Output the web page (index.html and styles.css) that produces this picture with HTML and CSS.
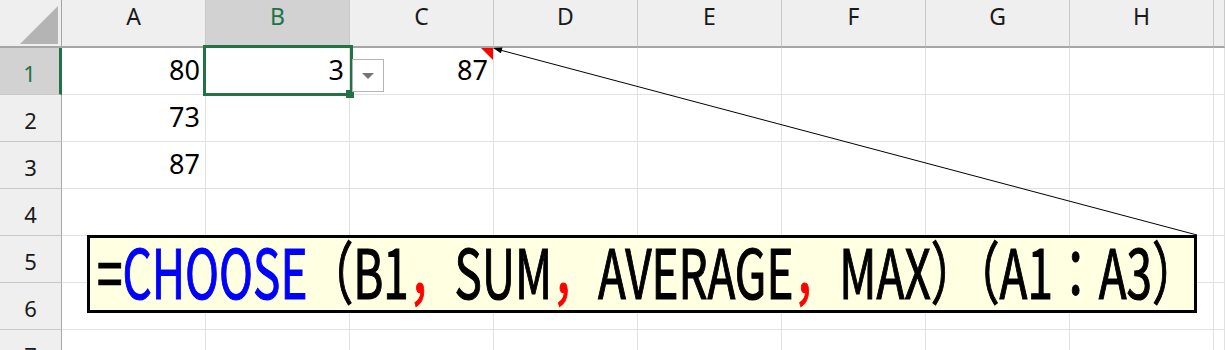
FILE: index.html
```html
<!DOCTYPE html>
<html lang="ja">
<head>
  <meta charset="UTF-8" />
  <title>CHOOSE</title>
  <link rel="stylesheet" href="styles.css">
</head>
<body>

  <div class="sheet">
    <div class="grid">
      <div class="corner"><div class="corner-mark"></div></div>
      <div class="col-head">A</div>
      <div class="col-head active">B</div>
      <div class="col-head">C</div>
      <div class="col-head">D</div>
      <div class="col-head">E</div>
      <div class="col-head">F</div>
      <div class="col-head">G</div>
      <div class="col-head">H</div>
      <div class="col-head"></div>

      <div class="row-head active">1</div>
      <div class="cell num">80</div>
      <div class="cell num">3</div>
      <div class="cell num">87</div>
      <div class="cell"></div><div class="cell"></div><div class="cell"></div><div class="cell"></div><div class="cell"></div><div class="cell"></div>

      <div class="row-head">2</div>
      <div class="cell num">73</div>
      <div class="cell"></div><div class="cell"></div><div class="cell"></div><div class="cell"></div><div class="cell"></div><div class="cell"></div><div class="cell"></div><div class="cell"></div>

      <div class="row-head">3</div>
      <div class="cell num">87</div>
      <div class="cell"></div><div class="cell"></div><div class="cell"></div><div class="cell"></div><div class="cell"></div><div class="cell"></div><div class="cell"></div><div class="cell"></div>

      <div class="row-head">4</div>
      <div class="cell"></div><div class="cell"></div><div class="cell"></div><div class="cell"></div><div class="cell"></div><div class="cell"></div><div class="cell"></div><div class="cell"></div><div class="cell"></div>

      <div class="row-head">5</div>
      <div class="cell"></div><div class="cell"></div><div class="cell"></div><div class="cell"></div><div class="cell"></div><div class="cell"></div><div class="cell"></div><div class="cell"></div><div class="cell"></div>

      <div class="row-head">6</div>
      <div class="cell"></div><div class="cell"></div><div class="cell"></div><div class="cell"></div><div class="cell"></div><div class="cell"></div><div class="cell"></div><div class="cell"></div><div class="cell"></div>

      <div class="row-head">7</div>
      <div class="cell"></div><div class="cell"></div><div class="cell"></div><div class="cell"></div><div class="cell"></div><div class="cell"></div><div class="cell"></div><div class="cell"></div><div class="cell"></div>
    </div>

    <!-- selected cell B1 -->
    <div class="selection"><span class="fill-handle"></span></div>
    <div class="dropdown"><span class="dropdown-arrow"></span></div>

    <!-- comment marker on C1 and its arrow -->
    <div class="comment-flag"></div>
    <svg class="arrow" width="1225" height="350" viewBox="0 0 1225 350">
      <line x1="1197" y1="235" x2="500" y2="50" stroke="#000" stroke-width="1" />
      <polygon points="493,48 502.5,47.4 500.9,53.2" fill="#000" />
    </svg>

    <div class="note">
      <span class="formula">=<span class="fn">CHOOSE</span>（B1<span class="sep">，</span>SUM<span class="sep">，</span>AVERAGE<span class="sep">，</span>MAX）（A1：A3）</span>
    </div>
  </div>

</body>
</html>
```

FILE: styles.css
```css
body {
  margin: 0;
  background: #fff;
  font-family: "Noto Sans", "Noto Sans CJK JP", sans-serif;
}

.sheet {
  position: relative;
  width: 1225px;
  height: 350px;
  overflow: hidden;
}

.grid {
  display: grid;
  grid-template-columns: 62px repeat(8, 144px) 1fr;
  grid-template-rows: 48px repeat(7, 47px);
}

.grid > div {
  box-sizing: border-box;
}

.corner {
  background: #efefef;
  border-right: 1px solid #a6a6a6;
  border-bottom: 2px solid #a6a6a6;
  position: relative;
}

.corner-mark {
  position: absolute;
  left: 20px;
  top: 6px;
  width: 38px;
  height: 38px;
  background: #b4b4b4;
  clip-path: polygon(100% 0, 100% 100%, 0 100%);
}

.col-head {
  background: #efefef;
  border-right: 1px solid #c8c8c8;
  border-bottom: 2px solid #a6a6a6;
  text-align: center;
  font-size: 23px;
  line-height: 23px;
  padding-top: 5px;
  color: #1a1a1a;
}

.col-head.active {
  background: #d2d2d2;
  color: #217346;
  border-bottom-color: #217346;
}

.row-head {
  background: #efefef;
  border-right: 1px solid #a6a6a6;
  border-bottom: 1px solid #c8c8c8;
  text-align: center;
  font-size: 22px;
  line-height: 22px;
  padding-top: 14px;
  color: #1a1a1a;
}

.row-head.active {
  background: #d2d2d2;
  color: #217346;
  border-right: 3px solid #217346;
}

.cell {
  border-right: 1px solid #e1e1e1;
  border-bottom: 1px solid #e1e1e1;
}

.num {
  display: flex;
  justify-content: flex-end;
  align-items: flex-end;
  padding: 0 5px 11px 0;
  font-size: 27px;
  line-height: 27px;
  color: #000;
}

.selection {
  position: absolute;
  left: 203px;
  top: 45px;
  width: 150px;
  height: 51px;
  box-sizing: border-box;
  border: 3px solid #217346;
}

.fill-handle {
  position: absolute;
  right: -4px;
  bottom: -5px;
  width: 8px;
  height: 8px;
  background: #217346;
}

.dropdown {
  position: absolute;
  left: 352px;
  top: 59px;
  width: 32px;
  height: 33px;
  box-sizing: border-box;
  border: 1px solid #b4b4b4;
  background: #fff;
  display: flex;
  align-items: center;
  justify-content: center;
}

.dropdown-arrow {
  width: 0;
  height: 0;
  border-left: 6px solid transparent;
  border-right: 6px solid transparent;
  border-top: 6px solid #767676;
}

.comment-flag {
  position: absolute;
  left: 481px;
  top: 48px;
  width: 12px;
  height: 12px;
  background: #ff0000;
  clip-path: polygon(0 0, 100% 0, 100% 100%);
}

.arrow {
  position: absolute;
  left: 0;
  top: 0;
  pointer-events: none;
}

.note {
  position: absolute;
  left: 87px;
  top: 235px;
  width: 1110px;
  height: 78px;
  box-sizing: border-box;
  border: 3px solid #000;
  background: #ffffe1;
  padding-left: 7px;
}

.formula {
  display: inline-block;
  white-space: nowrap;
  font-family: "Noto Sans CJK JP", sans-serif;
  font-size: 68px;
  line-height: 68px;
  margin-top: -2px;
  color: #000;
  -webkit-text-stroke: 1.2px currentColor;
  transform: scaleX(0.674);
  transform-origin: left center;
}

.fn {
  color: #0000ff;
}

.sep {
  color: #ff0000;
}
```
